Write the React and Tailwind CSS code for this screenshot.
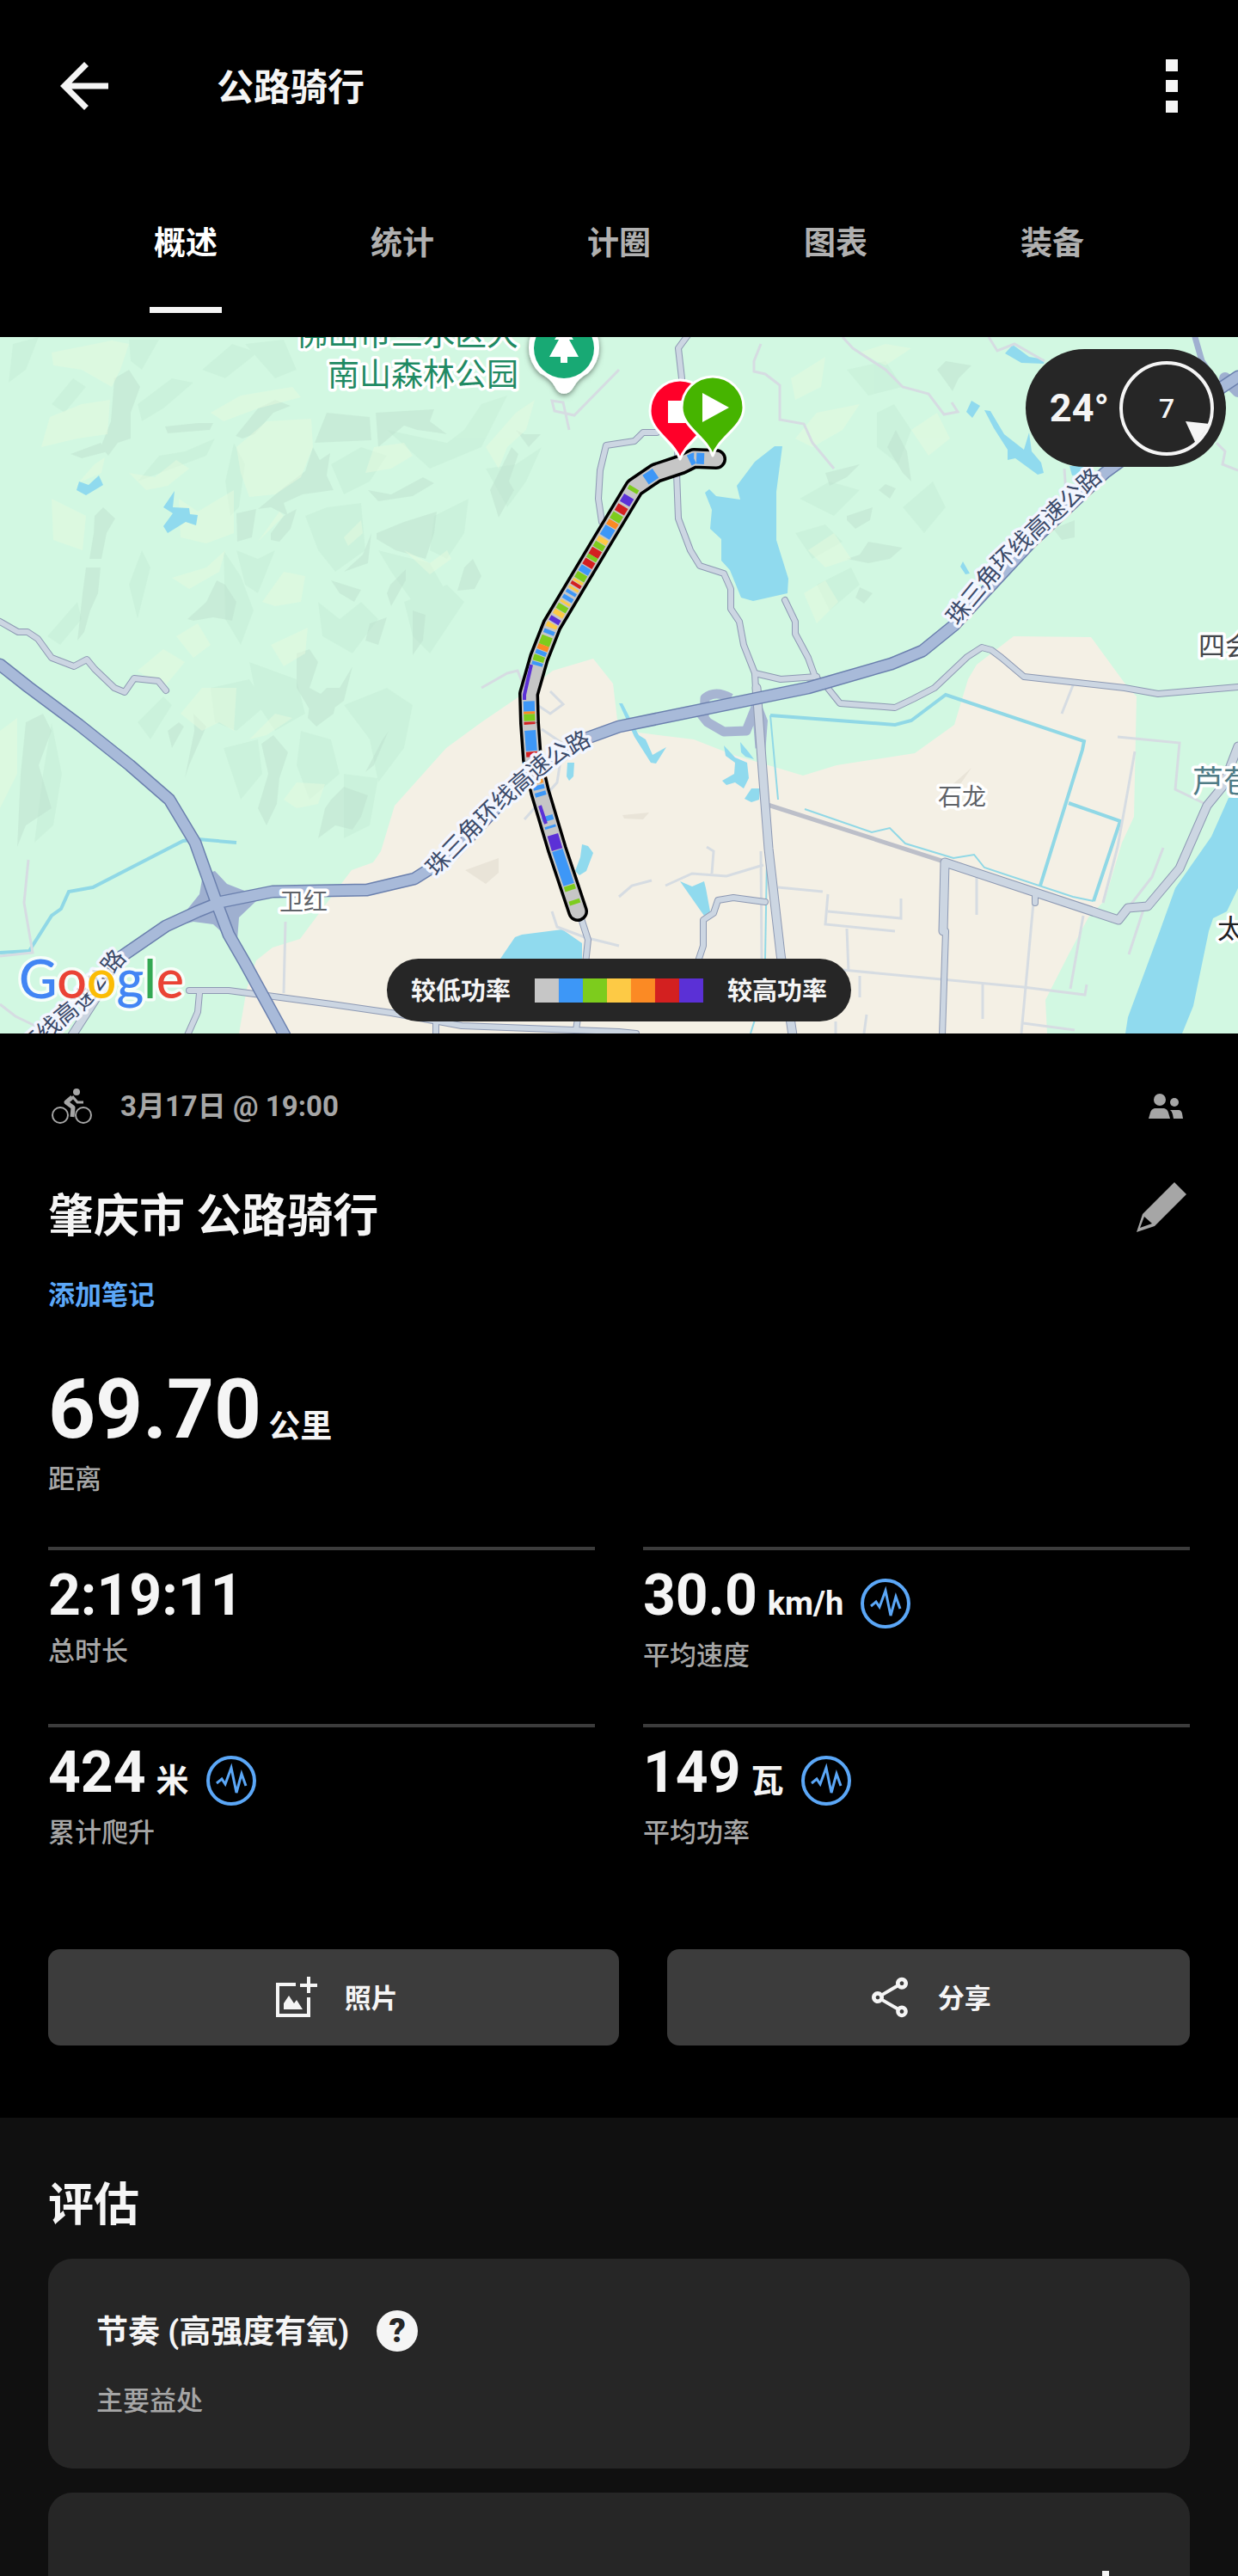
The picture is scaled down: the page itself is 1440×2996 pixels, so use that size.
import { useState } from "react";
import { MdArrowBack, MdOutlineShare } from "react-icons/md";

const TABS = ["概述", "统计", "计圈", "图表", "装备"];

const STATS = [
    { value: "2:19:11", label: "总时长" },
    { value: "30.0", unit: "km/h", label: "平均速度", chart: true },
    { value: "424", unit: "米", label: "累计爬升", chart: true },
    { value: "149", unit: "瓦", label: "平均功率", chart: true },
];

const GRAY = "#c6c6c6";
const BLUE = "#3d97f7";
const GREEN = "#7dcc1d";
const YELLOW = "#fdca45";
const ORANGE = "#fb8a24";
const RED = "#d32020";
const PURPLE = "#5b30d6";

const POWER_COLORS = [GRAY, BLUE, GREEN, YELLOW, ORANGE, RED, PURPLE];

// [start, length, color] along the ride line
const POWER_BANDS = [
    [14, 9, BLUE], [26, 6, BLUE], [74, 14, BLUE], [104, 5, GREEN], [116, 10, PURPLE],
    [129, 9, RED], [140, 9, GREEN], [150, 7, ORANGE], [158, 13, BLUE], [173, 6, YELLOW],
    [180, 7, GREEN], [188, 9, RED], [197, 5, GREEN], [203, 8, RED], [212, 8, BLUE],
    [221, 8, GREEN], [230, 3, YELLOW], [234, 4, RED], [240, 3, YELLOW], [245, 4, BLUE],
    [252, 5, BLUE], [259, 3, YELLOW], [264, 7, GREEN], [272, 6, YELLOW], [281, 6, PURPLE],
    [289, 5, YELLOW], [297, 5, BLUE], [305, 11, GREEN], [316, 6, ORANGE], [323, 5, BLUE],
    [329, 7, GREEN], [337, 4, BLUE], [384, 12, BLUE], [396, 3, ORANGE], [399, 8, GREEN],
    [408, 3, RED], [418, 24, BLUE], [443, 6, RED], [476, 5, ORANGE], [483, 5, BLUE],
    [491, 5, BLUE], [520, 6, BLUE], [532, 3, BLUE], [543, 18, PURPLE], [562, 42, BLUE],
    [605, 6, GREEN], [623, 5, GREEN],
];

const RIDE =
    "M833 534 L807 533 L793 540 L763 550 L738 567 L700 630 L642 727 L627 765 L615 807 L616 841 L619 883 L628 921 L648 988 L672 1060";

const LAND =
    "M278 1202 L287 1150 L298 1117 L317 1102 L349 1092 L393 1033 L409 1012 L434 1003 L443 990 L459 937 L519 870 L560 840 L607 808 L643 780 L690 766 L713 795 L718 837 L743 852 L807 860 L853 878 L904 893 L934 902 L973 890 L1064 876 L1110 843 L1126 790 L1136 773 L1179 740 L1269 741 L1310 797 L1322 810 L1319 950 L1305 980 L1285 1047 L1266 1067 L1243 1110 L1216 1163 L1218 1202z";

const WATER = [
    "M901 519H910L903 572V628L917 673L916 690L876 699L862 695L849 663L839 652V627L826 615L828 593L820 573L825 569L833 577L861 581L857 565L878 537z",
    "M92 560L103 564L115 553L120 564L100 576L89 570z",
    "M203 571L201 590L220 591L221 598L230 599L228 611L216 607L195 620L190 612L201 597L190 590z",
    "M1178 401L1197 415L1215 418L1214 423L1188 422L1169 411z",
    "M1130 466L1140 472L1131 486L1124 479z",
    "M1145 477L1152 478L1168 505L1191 523L1197 503L1200 525L1211 538L1214 550L1207 552L1181 533L1172 535V523L1156 498z",
    "M1244 542H1262L1256 552L1247 553z",
    "M1120 653L1128 667L1123 668L1117 659z",
    "M1429 928H1440V1033L1427 1060L1411 1068L1406 1083L1388 1170L1375 1202H1309L1312 1183L1349 1083L1367 1033L1409 973z",
    "M582 1115L599 1090L607 1087L654 1081L677 1097V1115z",
    "M660 887H668L667 903L662 908L659 903z",
    "M677 982L684 984L690 992L682 1013L674 1018L669 1013L675 997z",
    "M720 818H724L743 855L751 860L759 878L775 869L763 888L757 887L738 857z",
    "M842 867L855 881L869 887L871 905L865 917L855 910L845 913L840 908L854 900L855 887L844 879z",
    "M861 863L871 875L877 883L867 880L862 875z",
    "M874 917H884L883 930L874 933L866 929z",
    "M791 1025L805 1031L819 1025L821 1033L826 1060L819 1065z",
];

const CANALS = [
    "M0 1108L34 1106L60 1065L71 1057L80 1037L108 1032L213 978L230 976L275 980",
    "M896 832L1041 843L1060 838L1100 808L1261 862L1259 872L1210 1030",
    "M1243 934L1303 955L1272 1048",
];

const THIN_CANALS = [
    "M1272 1048L1248 1043L1145 1009L1133 994L1109 998L1053 981L1035 963L1014 968L936 941",
    "M896 832L905 930",
    "M892 1000L890 1115",
    "M878 1186L873 1202",
];

const DARK_RELIEF = [
    "M133 440L150 430L163 450L152 480V510L137 515L126 530L117 520L129 490z",
    "M82 528L117 515L126 525L95 533z",
    "M192 496L230 492L248 492L244 500L195 504z",
    "M274 507L300 475L320 465L338 472L318 480L296 505L282 510z",
    "M380 480L430 485L432 512L366 515z",
    "M437 480L470 478L505 476L500 490L520 505L485 500L470 495L440 520z",
    "M364 520L372 535L384 527L380 553L388 570L352 575L330 585L335 600L315 590L300 592L330 567L355 548z",
    "M455 575L492 555L505 562L480 577L440 583L428 570z",
    "M275 597L298 592L293 625L276 630z",
    "M315 620L330 600L345 592L338 615L325 630L315 628z",
    "M438 620L470 607L508 595L505 620L495 650L460 640L438 627z",
    "M110 600L120 590L134 603L124 620L118 650L104 650L109 620z",
    "M100 660H117L114 690L105 710L98 735L90 745L96 690z",
    "M570 570L595 520L603 528L592 560L598 570L580 602z",
    "M600 500L610 505H629L615 520z",
    "M400 665L422 645L432 620L428 655z",
    "M385 675L420 686L412 700L395 690z",
    "M454 680L472 662V675L455 705L450 690z",
    "M540 660L550 650L560 670L552 685L532 687z",
    "M218 720L240 700L252 675L262 680L275 700L270 722L248 718L225 722z",
    "M345 760L360 755L370 770L360 800L375 808L395 800L410 775L400 815L380 830L360 825L345 800z",
    "M430 725L450 718L440 750L425 745z",
    "M480 710L495 715L492 745L480 762z",
    "M304 865L318 855L335 875L325 905L322 935L310 960L300 940L312 900z",
    "M385 930L400 915L428 925L420 950L410 965L390 960L370 975L378 940z",
    "M360 820L380 800H395L388 830L368 845L358 835z",
    "M225 830L240 845L220 890L215 905L226 850z",
    "M445 860L452 850L435 890L425 898z",
    "M195 850L208 840L214 845L200 870z",
    "M30 840L50 830L60 850L45 890L60 940L30 960L20 985L24 900z",
    "M985 600L1015 590L1012 605L995 615L985 605z",
    "M1022 570L1030 563L1042 568L1035 580z",
    "M1010 630L1050 637L1035 650L1010 655L985 650L1000 645z",
    "M1000 683L1015 690L1005 702L995 695z",
    "M1032 520L1042 500L1055 525L1060 560L1050 550z",
    "M1100 420L1130 425L1115 440L1108 455L1090 430z",
    "M960 550L980 545L1000 540L985 555L965 565z",
    "M1225 615L1250 605L1250 625L1235 628z",
];

const SOFT_RELIEF = [
    "M15 400L45 392L30 430L10 445z",
    "M60 470L85 440L100 450L75 480z",
    "M150 395H185L165 430L152 420z",
    "M160 470L200 440L225 445L190 475L165 490z",
    "M235 430L270 400L300 410L262 440z",
    "M285 400L330 395L345 430L320 440z",
    "M160 560L185 530L215 525L250 510L240 530L200 545z",
    "M272 515L285 540L278 590L268 600L262 560z",
    "M385 540L420 520L450 530L430 560L400 575z",
    "M355 600L380 590L420 585L425 640L390 665L370 640z",
    "M275 640L300 650L320 640L300 690L285 680z",
    "M440 640L500 655L520 690L480 700L455 665z",
    "M450 500L520 515L540 500L560 470L590 460L560 520L500 545z",
    "M565 545L600 540L630 520L612 560L590 590z",
    "M505 600L545 580L540 620L520 650L500 640z",
    "M260 640L280 670L295 710L280 750L262 720z",
    "M370 700L395 720L420 700L440 720L410 760L375 740z",
    "M470 700L520 680L540 700L500 760L480 740z",
    "M150 680L165 640L175 660L160 720z",
    "M55 740L90 700L95 720L70 750z",
    "M245 800L290 790L310 820L275 850L250 840z",
    "M290 770L345 790L355 830L320 850L300 820z",
    "M400 820L450 800L480 820L470 870L440 910L430 860z",
    "M160 840L190 810L200 820L175 860z",
    "M260 870L300 860L305 900L280 930z",
    "M60 840L72 900L62 960L40 980L50 900z",
    "M350 850L385 860L395 900L360 930L345 890z",
    "M400 900L440 905L430 960L400 975z",
    "M930 580L965 560L1000 570L970 600z",
    "M1050 590L1085 560L1100 590L1075 620z",
    "M925 620L960 610L980 630L945 650z",
    "M950 680L990 660L1000 680L965 710z",
    "M985 430L1030 420L1050 450L1010 460z",
    "M1020 480L1040 470L1060 500L1045 540L1020 520z",
];

const LIGHT_RELIEF = [
    "M130 396L150 400L140 430L130 450L95 430L62 425L60 410z",
    "M58 485L95 470L128 465L125 505L90 510L48 520z",
    "M245 480L280 460L340 450L350 462L300 475L260 490z",
    "M275 520L310 490L362 487L364 520L350 555L320 575L290 578L280 550z",
    "M88 565L110 540L122 532L118 550L95 560z",
    "M150 550L180 555L205 535L220 545L195 565L170 570z",
    "M208 580L230 595L272 570V620L240 632L210 625z",
    "M60 580L100 600L96 640L62 628z",
    "M300 630L325 595L330 600L310 620z",
    "M400 625L420 605L422 620L405 635z",
    "M425 550L435 520L470 515L480 530L455 545z",
    "M565 520L600 480L622 465L612 500L590 520L580 545z",
    "M200 672L240 660L262 640L255 665L220 685z",
    "M305 700L330 665L355 670L350 700L320 705z",
    "M315 750L358 730L355 760L330 775z",
    "M205 740L230 725L245 750L225 765z",
    "M160 780L190 755L215 770L190 800z",
    "M470 640L500 655L520 640L525 650L500 668z",
    "M210 830L235 800L275 800L272 850L255 840L235 850z",
    "M290 860L320 830L340 835L310 855z",
    "M330 930L345 910L378 912L370 935L345 940z",
    "M0 850L20 835L20 900L0 940z",
    "M925 510L950 480L1000 470L980 500L945 520z",
    "M920 440L960 415L955 450L925 465z",
    "M940 640L970 620L990 650L960 660z",
    "M935 690L960 675L975 700L950 725z",
    "M1060 500L1090 480L1105 510L1080 530z",
    "M1000 410L1030 400L1060 405L1030 425z",
];

const HIGHWAYS = [
    "M0 773L33 799L92 843L151 890L197 930L227 980L252 1050L266 1087L285 1120L331 1204",
    "M130 1126L142 1112L193 1077L230 1060L257 1049L317 1037L427 1035L482 1022L528 993L600 915L684 858L720 845L940 800L1037 772L1073 757L1110 727L1200 630L1285 550L1422 450L1440 438",
];

const ROADS = [
    "M800 390L789 405L793 440L787 550L789 603L803 640L814 658L842 667L850 685V708L860 723L865 750L878 783L880 820",
    "M878 783L908 790L950 787",
    "M913 698L925 723V737L940 765L948 787L961 798L977 818L1041 823L1062 813L1087 800L1125 764L1142 753L1153 756L1165 765L1191 787L1308 800L1347 807L1440 799",
    "M0 723L21 735H32L44 743L60 765L86 775L101 767L110 778L133 800L145 805L156 789L184 792L193 803",
    "M220 1152H266L386 1168L455 1178L537 1193L720 1200L740 1202",
    "M232 1155L230 1177L218 1204",
    "M507 1186V1204",
    "M674 1062L684 1093L680 1130L670 1198",
    "M764 503H748L738 513L705 518L698 547L696 580L700 607",
    "M1100 1083L1096 1204",
    "M890 1049L853 1044L835 1047L830 1062L818 1070V1100L812 1118",
    "M1204 1042V1050",
];

const WIDE_ROADS = [
    "M880 800L886 883L894 987L908 1110L922 1204",
    "M1097 1083L1099 1003L1301 1070L1312 1056L1335 1054L1372 1010L1404 937L1422 915L1440 868",
    "M120 1148L84 1204",
];

const STREETS = [
    "M720 430L668 483L645 478L642 466L655 468L662 500",
    "M980 392L992 405L1030 430L1050 450L1080 458L1098 482L1114 479L1107 468",
    "M885 400L877 420V432L890 435L907 448V488L935 493L945 515L970 545",
    "M1150 392L1160 408L1180 400L1215 420",
    "M33 1000L28 1050L38 1108L0 1112",
    "M0 1168L18 1182L45 1195",
    "M332 1072L330 1155",
    "M610 800L602 780L590 783L560 800",
    "M640 804L655 819L640 830L625 820",
    "M630 848L655 865L648 910L610 953",
    "M642 1060L648 1078L680 1090L720 1100",
    "M720 1043L735 1030L758 1024",
    "M774 1030L805 1016L845 1019L888 1006",
    "M822 985L830 990L828 1016",
    "M885 990L886 1115",
    "M905 1032L957 1037",
    "M963 1040L960 1075L1041 1083",
    "M1048 1045V1068L963 1060",
    "M985 1080L987 1130",
    "M980 1128L1190 1148L1262 1157L1264 1145",
    "M1136 1020V1064",
    "M1202 1050L1188 1202",
    "M1260 1065L1245 1150",
    "M1320 874L1300 985L1283 1050",
    "M1300 857L1372 864L1367 918L1402 935",
    "M1353 986L1340 1020L1312 1056L1330 1058L1313 1110",
    "M1143 1145V1185",
    "M1000 1135V1160",
    "M1190 1190L1250 1198",
    "M972 1188V1202",
    "M1008 1180L1005 1202",
    "M1250 792L1235 830",
    "M1238 545L1240 575",
    "M1415 515L1425 525L1422 540L1440 547",
];

const RideMap = () => (
    <svg viewBox="0 392 1440 810" preserveAspectRatio="xMidYMid slice" className="block h-full w-full" aria-label="骑行地图">
        <defs>
            <path id="roadNorth" d="M1106 722L1164 652L1215 605L1276 550L1330 505" />
            <path id="roadMiddle" d="M500 1013L549 962L585 927L627 891L650 875L700 848" />
            <path id="roadSouth" d="M-70 1318L-10 1255L73 1181L94 1164L140 1108" />
            <filter id="pinShadow" x="-30%" y="-30%" width="160%" height="170%">
                <feDropShadow dx="0" dy="2" stdDeviation="3" floodOpacity="0.5" />
            </filter>
        </defs>

        <rect y="392" width="1440" height="810" fill="#d2f8e2" />
        <g fill="#c3ebd4" opacity="0.4">
            {SOFT_RELIEF.map((d) => <path key={d} d={d} />)}
        </g>
        <g fill="#bfe2cf" opacity="0.5">
            {DARK_RELIEF.map((d) => <path key={d} d={d} />)}
        </g>
        <g fill="#e6fadf" opacity="0.5">
            {LIGHT_RELIEF.map((d) => <path key={d} d={d} />)}
        </g>
        <path d={LAND} fill="#f4f0e5" />
        <path d="M541 1012L580 998V1015L565 1028zM724 948L755 945L748 953L726 952zM1105 915L1130 893L1115 915z" fill="#e9e4d8" />

        <g fill="#90daee">
            {WATER.map((d) => <path key={d} d={d} />)}
        </g>
        <g fill="none" stroke="#90d8e6">
            {CANALS.map((d) => <path key={d} d={d} strokeWidth="4" />)}
            {THIN_CANALS.map((d) => <path key={d} d={d} strokeWidth="2" />)}
        </g>

        <g fill="none" stroke="#d6dce2" strokeWidth="3">
            {STREETS.map((d) => <path key={d} d={d} />)}
            <path d="M890 935L1098 1002" stroke="#bcbfc9" strokeWidth="5" />
        </g>

        {/* Interchanges */}
        <path
            d="M250 1013L264 1028L287 1037L317 1036L298 1048L278 1067L276 1093L259 1085L248 1075L225 1072L193 1080L216 1060L232 1040L236 1017z"
            fill="#9fb0d0"
        />
        <path d="M815 830L823 840L842 851L868 850L880 820L884 870M819 835L820 812Q832 802 850 812" fill="none" stroke="#a7b5d2" strokeWidth="11" strokeLinejoin="round" />
        <path d="M882 810L893 838L889 890L880 860z" fill="#a7b5d2" />

        {/* Roads are drawn twice: edge first, then the fill on top */}
        <g fill="none" strokeLinejoin="round" strokeLinecap="round">
            <g stroke="#8d99b3">
                {ROADS.map((d) => <path key={d} d={d} strokeWidth="8" />)}
                {WIDE_ROADS.map((d) => <path key={d} d={d} strokeWidth="11" />)}
            </g>
            <g stroke="#ccd6e2">
                {ROADS.map((d) => <path key={d} d={d} strokeWidth="6" />)}
                {WIDE_ROADS.map((d) => <path key={d} d={d} strokeWidth="9" />)}
            </g>
            <path d="M1390 392L1398 420L1415 445" stroke="#9fb0d0" strokeWidth="7" />
            <path d="M1425 440L1440 455" stroke="#9fb0d0" strokeWidth="14" />
            {HIGHWAYS.map((d) => <path key={d} d={d} stroke="#6b80ae" strokeWidth="15" />)}
            {HIGHWAYS.map((d) => <path key={d} d={d} stroke="#a8bad9" strokeWidth="12" />)}
        </g>

        {/* Ride line colored by power */}
        <g fill="none" strokeLinejoin="round">
            <path d={RIDE} stroke="#000" strokeWidth="24" strokeLinecap="round" />
            <path d={RIDE} stroke={GRAY} strokeWidth="17" strokeLinecap="round" />
            {POWER_BANDS.map(([start, length, color]) => (
                <path
                    key={start}
                    d={RIDE}
                    pathLength="637"
                    stroke={color}
                    strokeWidth="13"
                    strokeDasharray={`${length} 1000`}
                    strokeDashoffset={-start}
                />
            ))}
            <path d="M618 773L610 808V814M628 937L635 958" stroke={PURPLE} strokeWidth="4" />
        </g>

        <g fontSize="27" fill="#3b4a69" stroke="#f3f6ff" strokeWidth="7" strokeLinejoin="round" paintOrder="stroke">
            <text dy="10"><textPath href="#roadNorth">珠三角环线高速公路</textPath></text>
            <text dy="10"><textPath href="#roadMiddle">珠三角环线高速公路</textPath></text>
            <text dy="10" textAnchor="end"><textPath href="#roadSouth" startOffset="100%">珠三角环线高速公路</textPath></text>
        </g>
        <g stroke="#fff" strokeWidth="7" strokeLinejoin="round" paintOrder="stroke">
            <g fontSize="37" fill="#1f8a63" textAnchor="end">
                <text x="603" y="402">佛山市三水区大</text>
                <text x="603" y="449">南山森林公园</text>
            </g>
            <text x="325" y="1059" fontSize="28" fill="#5f6368">卫红</text>
            <text x="1091" y="937" fontSize="28" fill="#5f6368">石龙</text>
            <text x="1394" y="762" fontSize="31" fill="#44474b">四会</text>
            <text x="1387" y="922" fontSize="36" fill="#4f7c86">芦苞</text>
            <text x="1416" y="1091" fontSize="31" fill="#202124">太平</text>
        </g>

        {/* Park pin */}
        <g filter="url(#pinShadow)">
            <path d="M656 458Q649 458 645 449Q640 440 628 434A41 41 0 1 1 684 434Q673 440 668 449Q663 458 656 458z" fill="#fff" />
        </g>
        <circle cx="656" cy="405" r="35" fill="#18a974" />
        <path d="M656 378L667 395H662L673 415H660V422H652V415H639L650 395H645z" fill="#fff" />

        {/* Finish and start pins */}
        <g stroke="#fff" strokeWidth="3" strokeLinejoin="round">
            <path d="M791 534C784 513 756 502 756 478A35 36 0 1 1 826 478C826 502 798 513 791 534z" fill="#ff0029" />
            <path d="M777 466H805V492H777z" fill="#fff" stroke="none" />
            <path d="M829 530C822 508 793 497 793 474A36 36 0 1 1 865 474C865 497 836 508 829 530z" fill="#46b400" />
            <path d="M817 457L848 474L817 491z" fill="#fff" stroke="none" />
        </g>

        <text x="22" y="1161" fontSize="61" stroke="#fff" strokeWidth="7" strokeOpacity="0.8" strokeLinejoin="round" paintOrder="stroke" className="font-['Lato',sans-serif] font-medium">
            <tspan fill="#4285f4">G</tspan>
            <tspan fill="#ea4335">o</tspan>
            <tspan fill="#fbbc05">o</tspan>
            <tspan fill="#4285f4">g</tspan>
            <tspan fill="#34a853">l</tspan>
            <tspan fill="#ea4335">e</tspan>
        </text>
    </svg>
);

const BikeIcon = () => (
    <svg viewBox="0 0 48 42" className="h-[42px] w-12" fill="none" stroke="currentColor">
        <circle cx="10" cy="31" r="9" strokeWidth="2" />
        <circle cx="37" cy="31" r="9" strokeWidth="2" />
        <circle cx="29" cy="4" r="4" fill="currentColor" stroke="none" />
        <path d="M24 10L17 16L25 22L24 33" strokeWidth="5" strokeLinejoin="round" />
        <path d="M24 9L30 16H37" strokeWidth="3" />
    </svg>
);

const PeopleIcon = () => (
    <svg viewBox="0 0 40 30" className="h-[30px] w-10" fill="currentColor">
        <circle cx="13" cy="7" r="7" />
        <circle cx="30" cy="10" r="5" />
        <path d="M0 29L2 22Q3 18 7 17H18Q22 18 23 22L25 29zM25 19H35Q38 19 39 23L40 29H29L28 24Q27 20 25 19z" />
    </svg>
);

const PencilIcon = () => (
    <svg viewBox="0 0 58 58" className="size-[58px]" fill="currentColor" fillRule="evenodd">
        <path d="M44 0L58 14L21 51L0 58L7 37zM9 40L4 53L18 48z" />
    </svg>
);

const PulseIcon = () => (
    <svg viewBox="0 0 58 58" className="size-[58px]" fill="none" stroke="currentColor">
        <circle cx="29" cy="29" r="27" strokeWidth="4" />
        <path d="M12 32L18 27L22 33L29 14L35 43L41 21L46 35" strokeWidth="3" />
    </svg>
);

const AddPhotoIcon = () => (
    <svg viewBox="0 0 48 48" className="size-12" fill="none" stroke="currentColor" strokeWidth="4">
        <path d="M23 9H2V45H38V24" />
        <path d="M38 0V19M28 10H48" />
        <path d="M9 38V31L15 22L21 31L24 27L31 38z" fill="currentColor" stroke="none" />
    </svg>
);

const Stat = ({ value, unit, label, chart }) => (
    <div className="border-t-4 border-[#3c3c3c] pt-5">
        <div className="flex items-start gap-5">
            <p className="flex items-baseline gap-3 text-[66px] leading-none font-bold">
                {value}
                {unit && <span className="text-[38px] font-bold">{unit}</span>}
            </p>
            {chart && (
                <button aria-label={label + "图表"} className="mt-[13px] text-[#5ba7f7]">
                    <PulseIcon />
                </button>
            )}
        </div>
        <p className="mt-2 text-[31px] leading-[48px] font-medium text-[#a6a6a6]">{label}</p>
    </div>
);

const App = () => {
    const [activeTab, setActiveTab] = useState("概述");

    return (
        <div className="h-screen overflow-hidden bg-black font-['Roboto','Noto_Sans_CJK_SC',sans-serif] text-[#f5f5f5]">
            <header>
                <div className="flex h-[200px] items-center px-14">
                    <button aria-label="返回">
                        <MdArrowBack size={84} />
                    </button>
                    <h1 className="ml-28 flex-1 pt-1 text-[43px] leading-[56px] font-bold">公路骑行</h1>
                    <button aria-label="更多" className="flex flex-col gap-[10px] px-[14px]">
                        <span className="size-[14px] bg-[#f5f5f5]"></span>
                        <span className="size-[14px] bg-[#f5f5f5]"></span>
                        <span className="size-[14px] bg-[#f5f5f5]"></span>
                    </button>
                </div>
                <nav className="grid h-48 grid-cols-5 px-[90px]">
                    {TABS.map((tab) => (
                        <button
                            key={tab}
                            onClick={() => setActiveTab(tab)}
                            className={`flex flex-col items-center justify-between pt-15 pb-7 text-[37px] leading-[48px] font-bold ${activeTab === tab ? "text-white" : "text-[#b0b0b0]"}`}
                        >
                            {tab}
                            {activeTab === tab && <span className="h-[7px] w-[84px] bg-[#f5f5f5]"></span>}
                        </button>
                    ))}
                </nav>
            </header>

            <section className="relative aspect-video overflow-hidden">
                <RideMap />

                {/* Weather */}
                <div className="absolute top-[14px] right-[14px] flex h-[137px] items-center gap-3 rounded-full bg-[#262626] pr-[14px] pl-7">
                    <span className="text-[45px] leading-none font-bold">24°</span>
                    <div className="relative flex size-[110px] items-center justify-center rounded-full border-4 border-[#f5f5f5] text-[32px] leading-none font-medium">
                        7
                        <svg viewBox="0 0 110 110" className="absolute -inset-1 size-[110px]" fill="#f5f5f5">
                            <path d="M77 70L105 73L89 96z" />
                        </svg>
                    </div>
                </div>

                {/* Power legend */}
                <div className="absolute bottom-[14px] left-1/2 flex h-[73px] -translate-x-1/2 items-center gap-7 rounded-full bg-[#262626] px-7 text-[29px] leading-none font-bold whitespace-nowrap">
                    <span className="pt-1">较低功率</span>
                    <div className="flex">
                        {POWER_COLORS.map((color) => (
                            <span key={color} className="size-7" style={{ backgroundColor: color }}></span>
                        ))}
                    </div>
                    <span className="pt-1">较高功率</span>
                </div>
            </section>

            <section className="px-14 pt-[61px] pb-[84px]">
                <div className="flex h-12 items-center text-[#a6a6a6]">
                    <span className="pl-1"><BikeIcon /></span>
                    <p className="ml-8 flex-1 text-[33px] leading-[48px] font-bold">3月17日 @ 19:00</p>
                    <span className="pr-2"><PeopleIcon /></span>
                </div>

                <div className="mt-16 flex items-start justify-between">
                    <h2 className="text-[53px] leading-[80px] font-bold">肇庆市 公路骑行</h2>
                    <button aria-label="编辑" className="pr-1 text-[#a6a6a6]">
                        <PencilIcon />
                    </button>
                </div>

                <a href="#notes" className="mt-7 block w-fit text-[31px] leading-[48px] font-bold text-[#5ba7f7]">添加笔记</a>

                <p className="mt-15 flex items-baseline gap-2 text-[96px] leading-none font-bold">
                    69.70
                    <span className="text-[37px] font-bold">公里</span>
                </p>
                <p className="mt-3 text-[31px] leading-[44px] font-medium text-[#a6a6a6]">距离</p>

                <div className="mt-14 grid auto-rows-[206px] grid-cols-2 gap-x-14">
                    {STATS.map((stat) => (
                        <Stat key={stat.label} {...stat} />
                    ))}
                </div>

                <div className="mt-14 grid grid-cols-[12fr_11fr] gap-14 text-[31px] font-bold">
                    <button className="flex h-28 items-center justify-center gap-8 rounded-[14px] bg-[#3c3c3c] pl-2">
                        <AddPhotoIcon />
                        <span className="pt-1">照片</span>
                    </button>
                    <button className="flex h-28 items-center justify-center gap-7 rounded-[14px] bg-[#3c3c3c]">
                        <MdOutlineShare size={56} />
                        <span className="pt-1">分享</span>
                    </button>
                </div>
            </section>

            <section className="bg-[#101010] px-14 pt-[68px] pb-14">
                <h2 className="text-[53px] leading-[68px] font-bold">评估</h2>

                <div className="mt-7 rounded-[28px] bg-[#262626] px-14 pt-15 pb-14">
                    <div className="flex items-center gap-8">
                        <h3 className="pt-1 text-[37px] leading-[44px] font-bold">节奏 (高强度有氧)</h3>
                        <button aria-label="帮助" className="size-12 rounded-full bg-[#f5f5f5] text-[38px] leading-[48px] font-black text-[#262626]">?</button>
                    </div>
                    <p className="mt-9 text-[31px] leading-[44px] font-medium text-[#a6a6a6]">主要益处</p>
                </div>

                <div className="mt-7 flex justify-end rounded-[28px] bg-[#262626] px-[74px] pt-[91px] pb-14">
                    <button aria-label="添加">
                        <svg viewBox="0 0 48 48" className="size-12" stroke="currentColor" strokeWidth="8">
                            <path d="M24 0V48M0 24H48" />
                        </svg>
                    </button>
                </div>
            </section>
        </div>
    );
};

export default App;
